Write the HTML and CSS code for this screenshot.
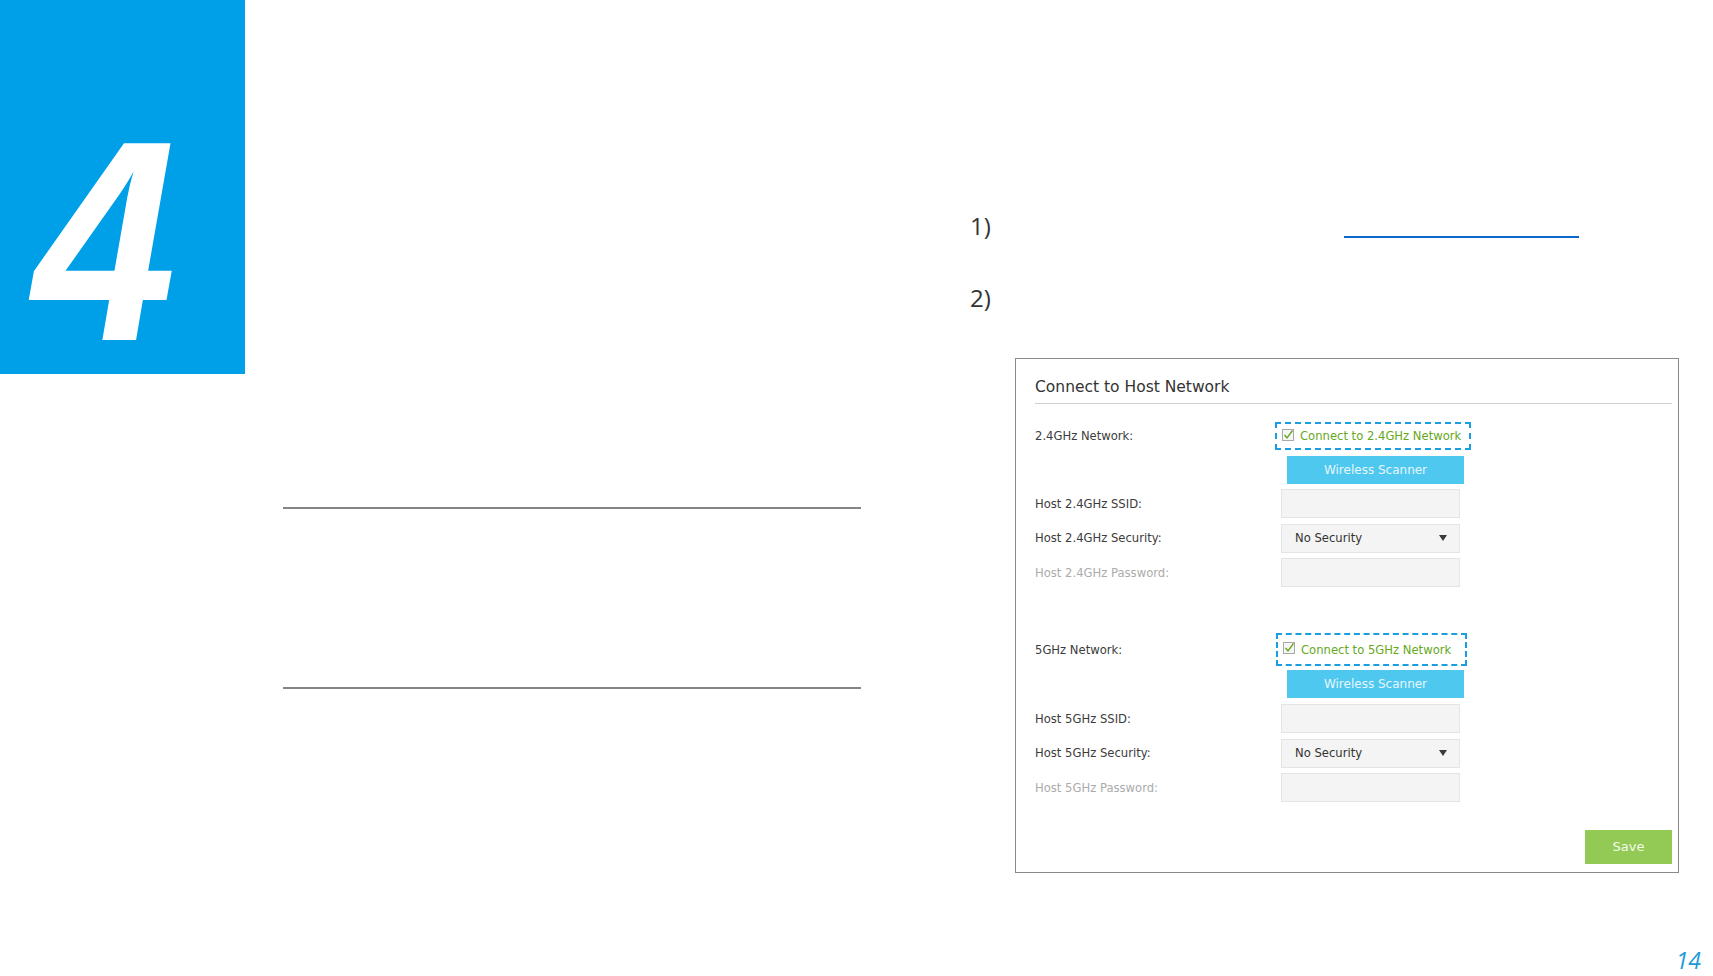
FILE: index.html
```html
<!DOCTYPE html>
<html lang="en">
<head>
<meta charset="utf-8">
<title>Chapter 4</title>
<link rel="stylesheet" href="styles.css">
</head>
<body>
<div class="page">
  <div class="chapter"><span class="chapter-num">4</span></div>
  <div class="middle">
    <div class="rule"></div>
    <div class="rule rule-2"></div>
  </div>
  <div class="right">
    <div class="steps">
      <div class="step"><span class="num">1)</span><span class="link"></span></div>
      <div class="step step-2"><span class="num">2)</span></div>
    </div>
    <div class="panel">
      <div class="panel-title">Connect to Host Network</div>
      <div class="form">
        <div class="row row-check">
          <div class="label">2.4GHz Network:</div>
          <div class="check-box">
            <svg class="cb" width="12" height="12" viewBox="0 0 12 12"><rect x="0.5" y="0.5" width="11" height="11" fill="#f6f6f6" stroke="#a8a8a8"/><path d="M2.5 6 L5 8.8 L10.5 1.5" fill="none" stroke="#6aa824" stroke-width="1.4"/></svg>
            <span class="check-text">Connect to 2.4GHz Network</span>
          </div>
        </div>
        <div class="row row-btn"><div class="label"></div><div class="btn-scan">Wireless Scanner</div></div>
        <div class="row"><div class="label">Host 2.4GHz SSID:</div><div class="input"></div></div>
        <div class="row"><div class="label">Host 2.4GHz Security:</div><div class="input select"><span>No Security</span><span class="arrow"></span></div></div>
        <div class="row"><div class="label label-dim">Host 2.4GHz Password:</div><div class="input"></div></div>

        <div class="row row-check row-check-5">
          <div class="label">5GHz Network:</div>
          <div class="check-box check-box-5">
            <svg class="cb" width="12" height="12" viewBox="0 0 12 12"><rect x="0.5" y="0.5" width="11" height="11" fill="#f6f6f6" stroke="#a8a8a8"/><path d="M2.5 6 L5 8.8 L10.5 1.5" fill="none" stroke="#6aa824" stroke-width="1.4"/></svg>
            <span class="check-text">Connect to 5GHz Network</span>
          </div>
        </div>
        <div class="row row-btn row-btn-5"><div class="label"></div><div class="btn-scan">Wireless Scanner</div></div>
        <div class="row"><div class="label">Host 5GHz SSID:</div><div class="input"></div></div>
        <div class="row"><div class="label">Host 5GHz Security:</div><div class="input select"><span>No Security</span><span class="arrow"></span></div></div>
        <div class="row"><div class="label label-dim">Host 5GHz Password:</div><div class="input"></div></div>
      </div>
      <div class="panel-foot"><div class="btn-save">Save</div></div>
    </div>
    <div class="page-num">14</div>
  </div>
</div>
</body>
</html>
```

FILE: styles.css
```css
html, body {
  margin: 0;
  padding: 0;
  background: #ffffff;
}

.page {
  display: flex;
  width: 1713px;
  height: 976px;
  overflow: hidden;
  font-family: "DejaVu Sans", sans-serif;
}

.chapter {
  flex: none;
  width: 245px;
  height: 374px;
  background: #00a0e9;
  box-sizing: border-box;
  padding: 141px 0 0 33px;
}

.chapter-num {
  display: block;
  width: 170px;
  font-family: "Liberation Sans", Arial, sans-serif;
  font-weight: bold;
  font-style: italic;
  font-size: 286px;
  line-height: 200px;
  color: #ffffff;
  transform: scaleX(0.9);
  transform-origin: left top;
}

.middle {
  flex: none;
  width: 578px;
  margin-left: 38px;
  padding-top: 507px;
}

.rule {
  height: 2px;
  background: #858585;
}

.rule-2 {
  margin-top: 178px;
}

.right {
  flex: 1;
  display: flex;
  flex-direction: column;
  margin-left: 109px;
}

.steps {
  padding-top: 211px;
  font-family: "Open Sans", "Noto Sans", sans-serif;
  font-size: 24px;
  color: #333333;
}

.step {
  display: flex;
  height: 30px;
  line-height: 30px;
}

.step-2 {
  margin-top: 42px;
}

.num {
  width: 374px;
  flex: none;
}

.link {
  width: 235px;
  height: 25px;
  border-bottom: 2px solid #0a68c8;
}

.panel {
  margin-top: 45px;
  margin-left: 45px;
  width: 664px;
  height: 515px;
  box-sizing: border-box;
  border: 1px solid #8a8a8a;
  padding: 18px 6px 0 19px;
  display: flex;
  flex-direction: column;
}

.panel-title {
  font-size: 15.5px;
  line-height: 20px;
  color: #333333;
  padding-bottom: 6px;
  border-bottom: 1px solid #cfcfcf;
}

.form {
  padding-top: 18px;
  display: flex;
  flex-direction: column;
}

.row {
  display: flex;
  align-items: center;
  height: 29px;
  margin-bottom: 5.5px;
  font-size: 11.6px;
  color: #3c3c3c;
}

.row-check {
  height: 28px;
  margin-bottom: 6px;
}

.row-check-5 {
  height: 33px;
  margin-top: 40.5px;
  margin-bottom: 4px;
}

.row-btn {
  height: 28px;
  margin-bottom: 5px;
}

.row-btn-5 {
  margin-bottom: 6px;
}

.label {
  flex: none;
  width: 246px;
}

.label-dim {
  color: #ababab;
}

.check-box {
  display: flex;
  align-items: center;
  margin-left: -6px;
  width: 196px;
  height: 28px;
  box-sizing: border-box;
  border: 2px dashed #1a9ee0;
  padding-left: 5px;
  color: #66a81c;
}

.check-box-5 {
  margin-left: -5px;
  width: 191px;
  height: 33px;
}

.cb {
  flex: none;
  margin-right: 6px;
  margin-top: -3px;
}

.btn-scan {
  margin-left: 6px;
  width: 177px;
  height: 28px;
  line-height: 28px;
  background: #4fc8f0;
  color: #e6f6fc;
  text-align: center;
  font-size: 12px;
}

.input {
  width: 179px;
  height: 29px;
  box-sizing: border-box;
  background: #f4f4f4;
  border: 1px solid #e4e4e4;
}

.select {
  display: flex;
  align-items: center;
  justify-content: space-between;
  padding: 0 12px 0 13px;
  color: #333333;
}

.arrow {
  width: 0;
  height: 0;
  border-left: 4px solid transparent;
  border-right: 4px solid transparent;
  border-top: 6px solid #3a3a3a;
}

.panel-foot {
  margin-top: auto;
  padding-bottom: 8px;
  display: flex;
  justify-content: flex-end;
}

.btn-save {
  width: 87px;
  height: 34px;
  line-height: 34px;
  background: #92ca55;
  color: #f2faea;
  text-align: center;
  font-size: 13px;
}

.page-num {
  margin-top: auto;
  align-self: flex-end;
  margin-right: 12px;
  margin-bottom: 2px;
  font-family: "Open Sans", "Noto Sans", sans-serif;
  font-style: italic;
  font-size: 23px;
  line-height: 28px;
  color: #1c9ad8;
}
```
